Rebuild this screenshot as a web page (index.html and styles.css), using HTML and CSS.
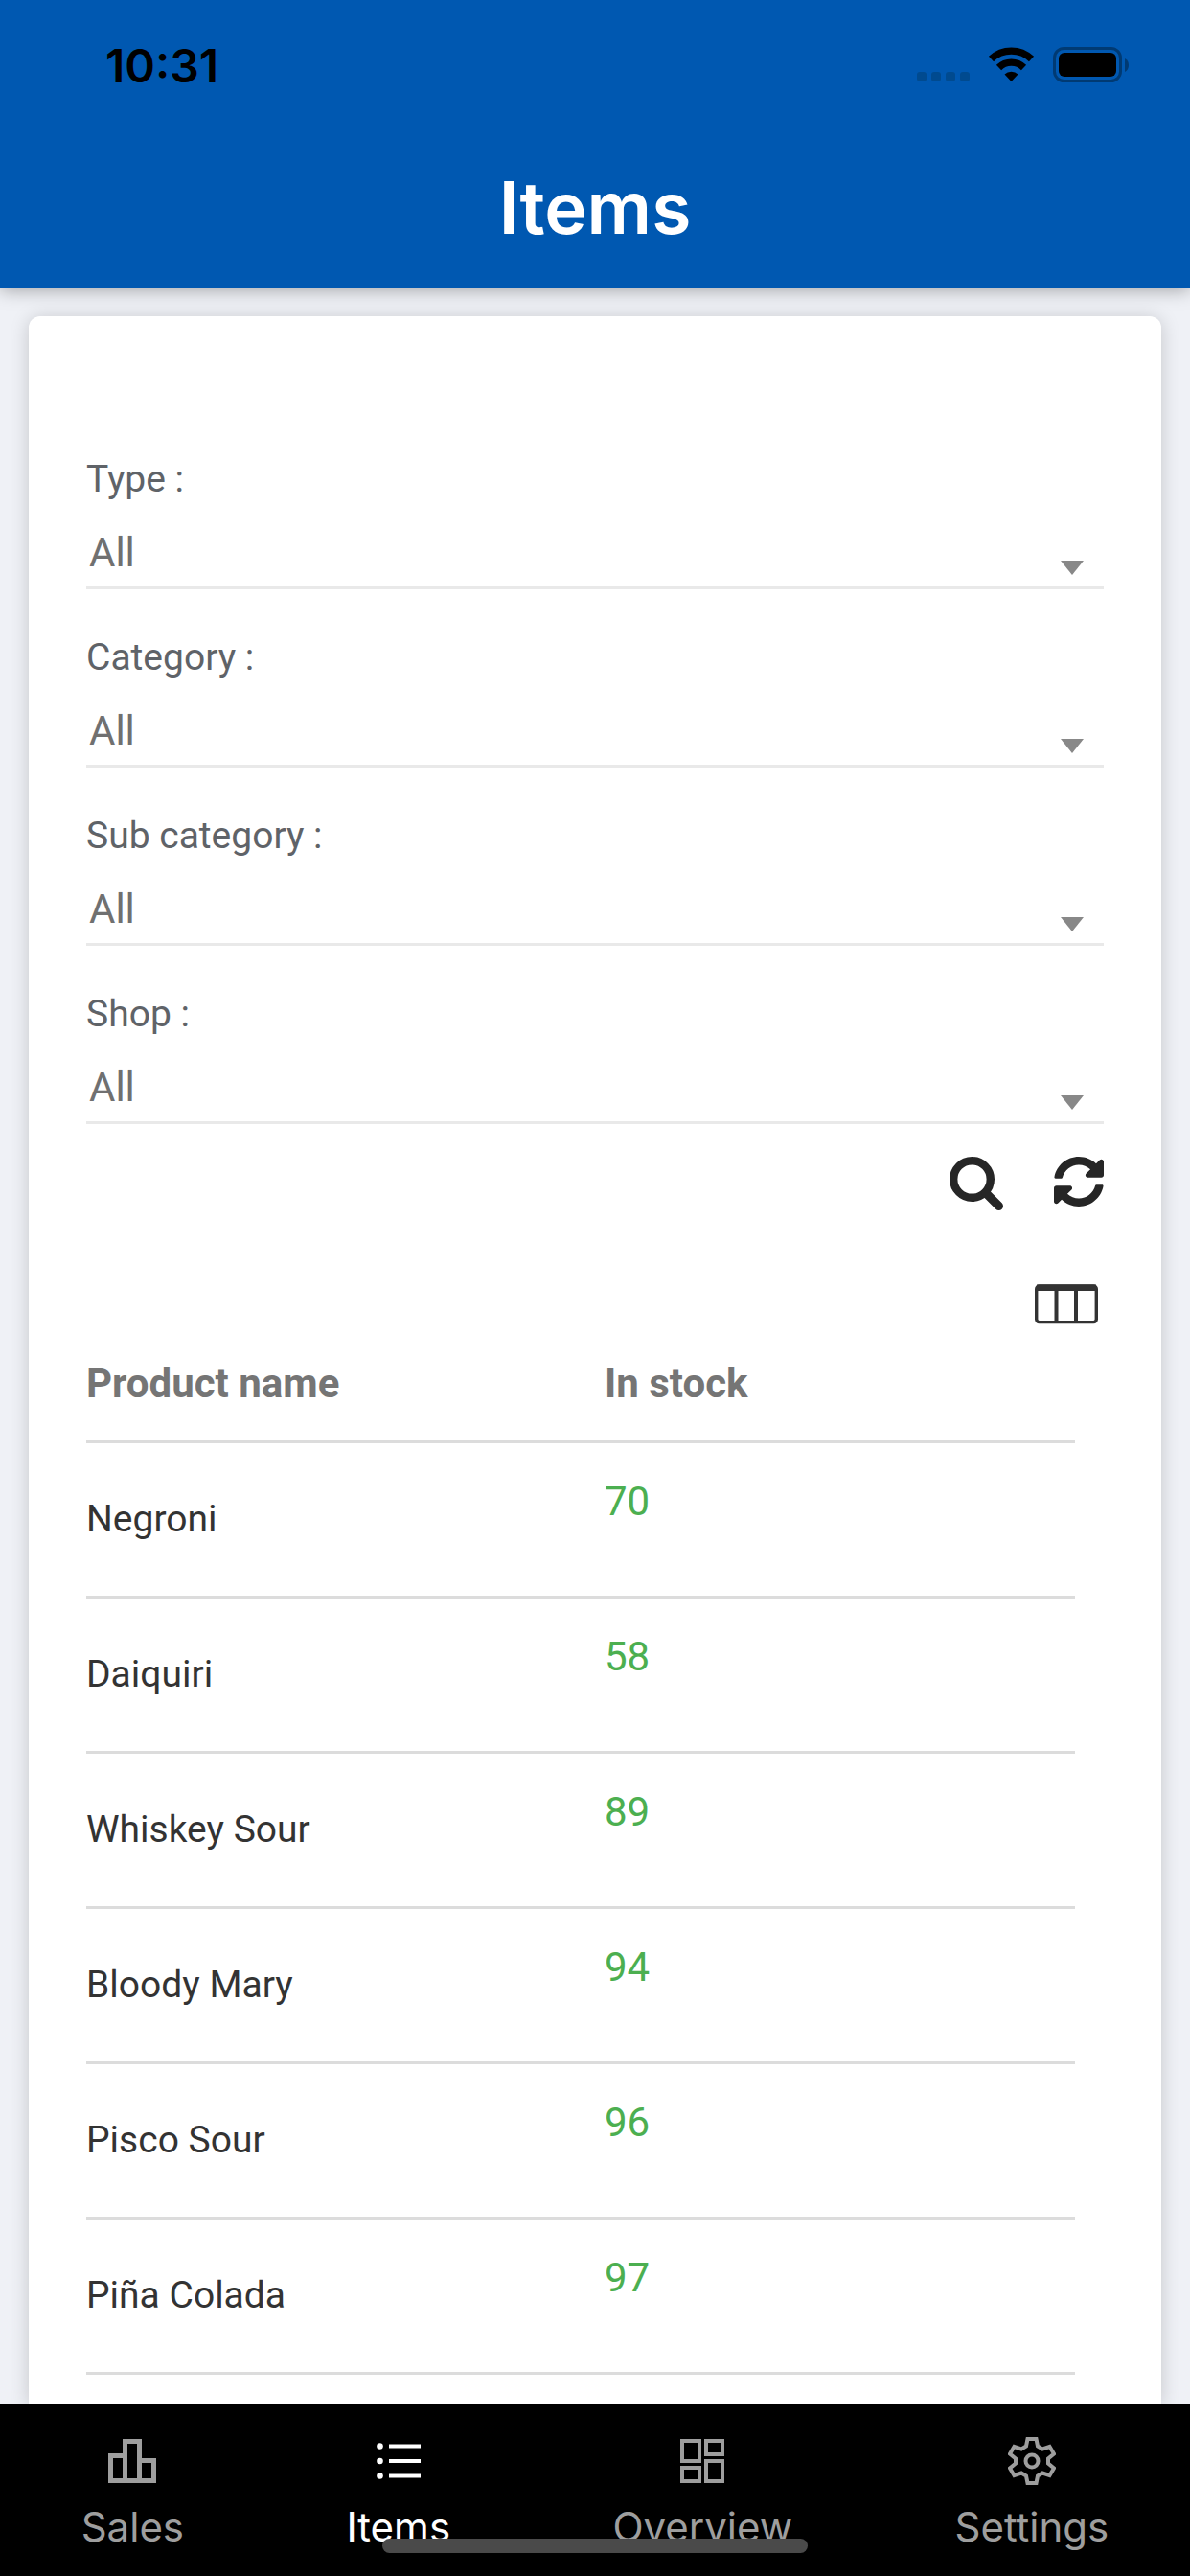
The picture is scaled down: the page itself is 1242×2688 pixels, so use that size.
FILE: index.html
```html
<!DOCTYPE html>
<html lang="en">
<head>
<meta charset="utf-8">
<meta name="viewport" content="width=device-width, initial-scale=1">
<title>Items</title>
<link rel="stylesheet" href="styles.css">
</head>
<body>
<header class="header">
  <div class="status">
    <span class="status-time">10:31</span>
    <svg class="status-icons" width="222" height="38" viewBox="0 0 222 38" aria-hidden="true">
      <g fill="#004a8f">
        <rect x="0" y="26" width="10" height="10" rx="3"/>
        <rect x="15" y="26" width="10" height="10" rx="3"/>
        <rect x="30" y="26" width="10" height="10" rx="3"/>
        <rect x="45" y="26" width="10" height="10" rx="3"/>
      </g>
      <g fill="none" stroke="#000" stroke-width="7.4">
        <path d="M77.500 12.500A30.500 30.500 0 0 1 119.500 12.500"/>
        <path d="M85.500 21.500A18.500 18.500 0 0 1 111.500 21.500"/>
      </g>
      <path d="M98.500 36l-7-7.500a10 10 0 0 1 14 0z"/>
      <rect x="143.500" y="1.500" width="69" height="34" rx="10" fill="none" stroke="#003a73" stroke-width="3"/>
      <rect x="148" y="6" width="60" height="25" rx="6"/>
      <path d="M217 12q4 2 4 7t-4 7z" fill="#003a73"/>
    </svg>
  </div>
  <h1 class="title">Items</h1>
</header>
<main class="content">
  <section class="card">
    <form class="filters">
      <div class="field">
        <label for="type">Type :</label>
        <select id="type"><option>All</option></select>
      </div>
      <div class="field">
        <label for="category">Category :</label>
        <select id="category"><option>All</option></select>
      </div>
      <div class="field">
        <label for="subcategory">Sub category :</label>
        <select id="subcategory"><option>All</option></select>
      </div>
      <div class="field">
        <label for="shop">Shop :</label>
        <select id="shop"><option>All</option></select>
      </div>
      <div class="actions">
        <button class="icon-button" type="submit" aria-label="Search">
          <svg width="56" height="56" viewBox="0 0 56 56" fill="none" stroke="#262626">
            <circle cx="23.500" cy="23.500" r="19.300" stroke-width="8.400"/>
            <path d="M38 38L51.500 51.500" stroke-width="9" stroke-linecap="round"/>
          </svg>
        </button>
        <button class="icon-button" type="reset" aria-label="Refresh">
          <svg width="52" height="52" viewBox="8 8 496 496" fill="#262626">
            <path d="M370.720 133.280C339.458 104.008 298.888 87.962 255.848 88c-77.458.068-144.328 53.178-162.791 126.850-1.344 5.363-6.122 9.150-11.651 9.150H24.103c-7.498 0-13.194-6.807-11.807-14.176C33.933 94.924 134.813 8 256 8c66.448 0 126.791 26.136 171.315 68.685L463.030 40.970C478.149 25.851 504 36.559 504 57.941V192c0 13.255-10.745 24-24 24H345.941c-21.382 0-32.090-25.851-16.971-40.971l41.750-41.749zM32 296h134.059c21.382 0 32.090 25.851 16.971 40.971l-41.750 41.750c31.262 29.273 71.835 45.319 114.876 45.280 77.418-.070 144.315-53.144 162.787-126.849 1.344-5.363 6.122-9.150 11.651-9.150h57.304c7.498 0 13.194 6.807 11.807 14.176C478.067 417.076 377.187 504 256 504c-66.448 0-126.791-26.136-171.315-68.685L48.970 471.030C33.851 486.149 8 475.441 8 454.059V320c0-13.255 10.745-24 24-24z"/>
          </svg>
        </button>
      </div>
    </form>
    <div class="columns">
      <button class="icon-button" type="button" aria-label="Choose columns">
        <svg width="66" height="42" viewBox="0 0 66 42" fill="none" stroke="#333" stroke-width="3.400">
          <rect x="1.700" y="2" width="62.600" height="37.600" rx="3"/>
          <path d="M2 3.700H64" stroke-width="6.600"/>
          <path d="M22.500 3V40M43 3V40" stroke-width="4"/>
        </svg>
      </button>
    </div>
    <table class="items">
      <thead><tr><th scope="col">Product name</th><th scope="col">In stock</th></tr></thead>
      <tbody>
        <tr><td>Negroni</td><td class="stock">70</td></tr>
        <tr><td>Daiquiri</td><td class="stock">58</td></tr>
        <tr><td>Whiskey Sour</td><td class="stock">89</td></tr>
        <tr><td>Bloody Mary</td><td class="stock">94</td></tr>
        <tr><td>Pisco Sour</td><td class="stock">96</td></tr>
        <tr><td>Piña Colada</td><td class="stock">97</td></tr>
      </tbody>
    </table>
  </section>
</main>
<nav class="tabs">
  <a class="tab" href="#sales">
    <svg width="50" height="50" viewBox="0 0 50 50" fill="none" stroke="currentColor" stroke-width="5">
      <path d="M2.500 45.500V19.500H17.500V4.500H32.500V24.500H47.500V45.500ZM17.500 19.500V45.500M32.500 24.500V45.500"/>
    </svg>
    <span>Sales</span>
  </a>
  <a class="tab tab-active" href="#items" aria-current="page">
    <svg width="46" height="50" viewBox="0 0 46 50" fill="currentColor">
      <circle cx="3.500" cy="9.500" r="3.300"/><circle cx="3.500" cy="25" r="3.300"/><circle cx="3.500" cy="40.500" r="3.300"/>
      <path d="M13 7.500h33v4H13zM13 23h33v4H13zM13 38.500h33v4H13z"/>
    </svg>
    <span>Items</span>
  </a>
  <a class="tab" href="#overview">
    <svg width="46" height="50" viewBox="0 0 46 50" fill="none" stroke="currentColor" stroke-width="4">
      <path d="M2 4H20V25H2ZM27 4H44V18H27ZM2 32H20V46H2ZM27 25H44V46H27Z"/>
    </svg>
    <span>Overview</span>
  </a>
  <a class="tab" href="#settings">
    <svg width="50" height="50" viewBox="0 0 50 50" fill="none" stroke="currentColor" stroke-width="4">
      <path d="M20.500 2H29.500L31 9.500L36 12.500L43.500 10L48 17.500L42 22.500V27.500L48 32.500L43.500 40L36 37.500L31 40.500L29.500 48H20.500L19 40.500L14 37.500L6.500 40L2 32.500L8 27.500V22.500L2 17.500L6.500 10L14 12.500L19 9.500Z"/>
      <circle cx="25" cy="25" r="6.500"/>
    </svg>
    <span>Settings</span>
  </a>
  <div class="home-indicator"></div>
</nav>
</body>
</html>
```
FILE: styles.css
```css
* {
  box-sizing: border-box;
}

body {
  margin: 0;
  min-height: 100vh;
  display: flex;
  flex-direction: column;
  background: #eff1f6;
  font-family: Roboto, "Liberation Sans", sans-serif;
}

.header {
  position: relative;
  z-index: 1;
  background: #0058b1;
  box-shadow: 0 2px 18px rgba(0, 0, 0, 0.35);
  font-family: Inter, "Liberation Sans", sans-serif;
}

.status {
  display: flex;
  justify-content: space-between;
  align-items: center;
  height: 136px;
  padding: 0 63px 0 110px;
}

.status-time {
  font-size: 48px;
  font-weight: 600;
}

.title {
  margin: 0;
  height: 164px;
  color: #fff;
  font-size: 75px;
  font-weight: 600;
  line-height: 162px;
  text-align: center;
}

.content {
  flex: 1;
  display: flex;
  padding: 30px 30px 0;
}

.card {
  flex: 1;
  padding: 126px 60px 0;
  border-radius: 12px 12px 0 0;
  background: #fff;
  box-shadow: 0 2px 20px rgba(0, 0, 0, 0.18);
}

.field {
  height: 186px;
  padding-top: 18px;
  display: flex;
  flex-direction: column;
}

.field label {
  color: #5f6368;
  font-size: 39px;
  line-height: 52px;
}

.field select {
  appearance: none;
  width: 100%;
  height: 89px;
  margin: 0;
  padding: 16px 3px 0;
  border: 0;
  border-bottom: 3px solid #e9e9e9;
  border-radius: 0;
  background: url("data:image/svg+xml,%3Csvg xmlns='http://www.w3.org/2000/svg' width='24' height='15'%3E%3Cpath d='M0 0h24L12 15z' fill='%23888'/%3E%3C/svg%3E") no-repeat right 21px bottom 12px;
  color: #707070;
  font: 42px/60px Roboto, "Liberation Sans", sans-serif;
}

.actions {
  display: flex;
  justify-content: flex-end;
  align-items: flex-start;
  gap: 53px;
  padding-top: 7px;
}

.icon-button {
  display: block;
  padding: 0;
  border: 0;
  background: none;
}

.icon-button svg {
  display: block;
}

.columns {
  display: flex;
  justify-content: flex-end;
  padding: 77px 6px 0;
}

.items {
  width: calc(100% - 30px);
  table-layout: fixed;
  border-collapse: separate;
  border-spacing: 0;
  text-align: left;
}

.items th,
.items td {
  padding: 0;
  border-bottom: 3px solid #dcdcdc;
}

.items th {
  height: 124px;
  padding-top: 2px;
  color: #757575;
  font-size: 42px;
  font-weight: 700;
}

.items th:first-child {
  width: 541px;
}

.items td {
  height: 162px;
  padding-bottom: 2px;
  color: #333;
  font-size: 39px;
}

.items .stock {
  padding-top: 36px;
  color: #4caf50;
  font-size: 42px;
  vertical-align: top;
}

.tabs {
  position: relative;
  display: flex;
  justify-content: space-around;
  height: 180px;
  padding-top: 35px;
  background: #000;
  font-family: Inter, "Liberation Sans", sans-serif;
}

.tab {
  display: flex;
  flex-direction: column;
  align-items: center;
  gap: 18px;
  color: #9e9e9e;
  font-size: 42px;
  line-height: 52px;
  text-decoration: none;
}

.tab-active {
  color: #fff;
}

.home-indicator {
  position: absolute;
  bottom: 24px;
  left: 50%;
  width: 444px;
  height: 15px;
  margin-left: -222px;
  border-radius: 8px;
  background: #4a4a4a;
}
```
